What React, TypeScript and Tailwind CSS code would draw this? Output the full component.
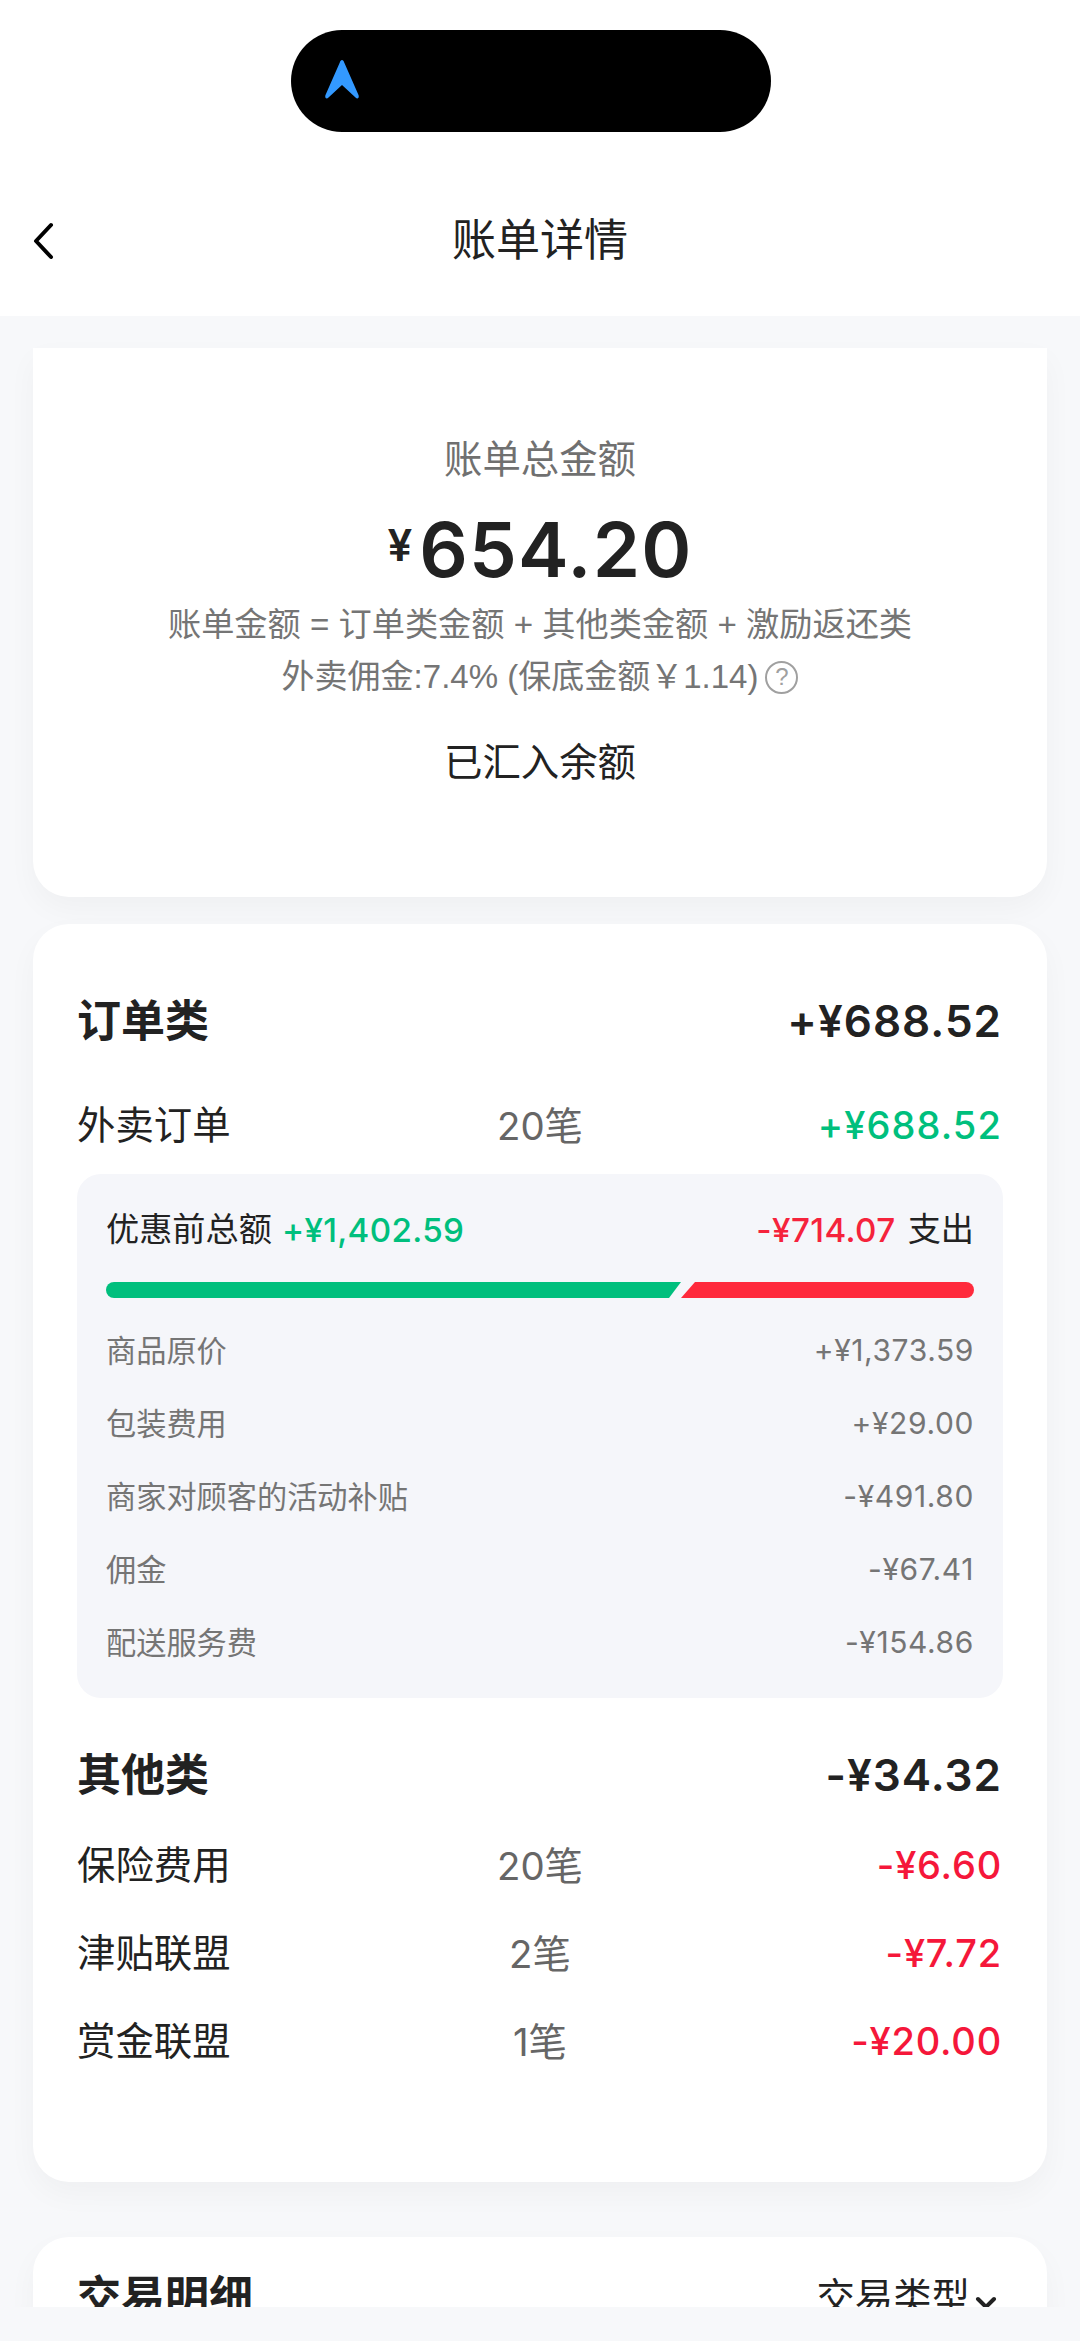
const breakdown: [string, string][] = [
  ["商品原价", "+¥1,373.59"],
  ["包装费用", "+¥29.00"],
  ["商家对顾客的活动补贴", "-¥491.80"],
  ["佣金", "-¥67.41"],
  ["配送服务费", "-¥154.86"],
];

const others: [string, string, string][] = [
  ["保险费用", "20笔", "-¥6.60"],
  ["津贴联盟", "2笔", "-¥7.72"],
  ["赏金联盟", "1笔", "-¥20.00"],
];

function LineRow({ name, count, amount, color }: { name: string; count: string; amount: string; color: string }) {
  return (
    <div className="grid grid-cols-3 items-center h-[88px]">
      <span className="text-[38.4px] leading-[56px] text-[#222]">{name}</span>
      <span className="text-[38.4px] leading-[56px] text-[#666] text-center font-['Inter','Noto_Sans_CJK_SC',sans-serif]">{count}</span>
      <span className={`text-[38px] leading-[56px] font-medium font-['Inter',sans-serif] tracking-[0.8px] text-right pr-[1px] mt-[-2px] ${color}`}>{amount}</span>
    </div>
  );
}

function SectionHead({ title, amount }: { title: string; amount: string }) {
  return (
    <div className="flex items-center justify-between h-[56px]">
      <span className="text-[44px] leading-[56px] font-bold text-[#222]">{title}</span>
      <span className="text-[44px] leading-[56px] font-semibold font-['Inter',sans-serif] tracking-[1px] pr-[1px] mt-[-2px] text-[#222]">{amount}</span>
    </div>
  );
}

export default function App() {
  return (
    <div className="w-[1080px] h-[2341px] flex flex-col overflow-hidden bg-[#f7f8fa] font-['Liberation_Sans','Noto_Sans_CJK_SC',sans-serif]">
      <header className="bg-white shrink-0 pt-[30px] pb-[46px]">
        <div className="ml-[291px] w-[480px] h-[102px] rounded-full bg-black flex items-center pl-[33px]">
          <svg className="mt-[-4px]" width="36" height="39" viewBox="0 0 36 39" fill="#3399ff">
            <path d="M18 0 C19 0 19.8 1 20.2 2.5 L34.5 35 C35.5 38 33.5 39.5 31.5 37.5 L18 25 L4.5 37.5 C2.5 39.5 .5 38 1.5 35 L15.8 2.5 C16.2 1 17 0 18 0Z" />
          </svg>
        </div>
        <div className="mt-[78px] h-[60px] grid grid-cols-[1fr_auto_1fr] items-center">
          <svg className="ml-[31px]" width="24" height="38" viewBox="0 0 24 38" fill="none" stroke="#000" strokeWidth="4" strokeLinecap="round" strokeLinejoin="round">
            <path d="M20 3 L5 19 L20 35" />
          </svg>
          <h1 className="text-[44px] leading-[60px] font-normal text-[#222] mt-[1px]">账单详情</h1>
          <div />
        </div>
      </header>

      <main className="flex-1 min-h-0 overflow-hidden px-[33px] pt-[32px]">
        <section className="bg-white rounded-b-[36px] shadow-[0_12px_30px_rgba(0,0,0,0.035)] pt-[90px] pb-[112px] text-center">
          <div className="text-[38.4px] leading-[44px] text-[#707070]">账单总金额</div>
          <div className="mt-[22px] h-[90px] flex items-center justify-center text-[#222]">
            <span className="text-[44px] leading-[44px] font-semibold font-['Inter',sans-serif] mt-[-8px] mr-[7px]">¥</span>
            <span className="text-[76px] leading-[90px] font-semibold font-['Inter',sans-serif] tracking-[1.2px]">654.20</span>
          </div>
          <div className="mt-[5px] text-[33.2px] leading-[52px] text-[#757575]">账单金额 = 订单类金额 + 其他类金额 + 激励返还类</div>
          <div className="flex items-center justify-center text-[33px] leading-[52px] text-[#757575]">
            <span>外卖佣金:7.4% (保底金额￥1.14)</span>
            <span className="ml-[7px] w-[33px] h-[33px] rounded-full border-[2.5px] border-[#a0a0a0] flex items-center justify-center text-[24px] leading-none text-[#a0a0a0]">?</span>
          </div>
          <div className="mt-[38px] text-[38.4px] leading-[44px] text-[#222]">已汇入余额</div>
        </section>

        <section className="mt-[27px] bg-white rounded-[36px] shadow-[0_12px_30px_rgba(0,0,0,0.035)] px-[44px] pt-[70px] pb-[96px]">
          <SectionHead title="订单类" amount="+¥688.52" />
          <div className="mt-[48px] grid grid-cols-3 items-center h-[56px]">
            <span className="text-[38.4px] leading-[56px] text-[#222]">外卖订单</span>
            <span className="text-[38.4px] leading-[56px] text-[#666] text-center font-['Inter','Noto_Sans_CJK_SC',sans-serif]">20笔</span>
            <span className="text-[38px] leading-[56px] font-medium font-['Inter',sans-serif] tracking-[1.1px] text-right pr-[1px] mt-[-2px] text-[#00bf7d]">+¥688.52</span>
          </div>

          <div className="mt-[20px] bg-[#f5f6fa] rounded-[24px] px-[29px] pt-[36px] pb-[18px]">
            <div className="flex items-center justify-between h-[40px] text-[33.2px] leading-[40px] text-[#222]">
              <div className="flex items-center gap-[10px]">
                <span>优惠前总额</span>
                <span className="font-medium font-['Inter',sans-serif] tracking-[0.3px] text-[#00bf7d]">+¥1,402.59</span>
              </div>
              <div className="flex items-center gap-[12px]">
                <span className="font-medium font-['Inter',sans-serif] tracking-[0.4px] text-[#f5233c]">-¥714.07</span>
                <span>支出</span>
              </div>
            </div>
            <div className="mt-[32px] flex h-[16px]">
              <div className="w-[575px] rounded-l-full bg-[#00bf7d] [clip-path:polygon(0_0,100%_0,calc(100%-12px)_100%,0_100%)]" />
              <div className="flex-1 rounded-r-full bg-[#ff2a3c] [clip-path:polygon(14px_0,100%_0,100%_100%,0_100%)]" />
            </div>
            <div className="mt-[18px]">
              {breakdown.map(([label, value]) => (
                <div key={label} className="flex items-center justify-between h-[72.8px] text-[#757575]">
                  <span className="text-[30.2px] leading-[40px]">{label}</span>
                  <span className="text-[30px] leading-[40px] font-['Inter',sans-serif] tracking-[0.6px] mt-[-4px]">{value}</span>
                </div>
              ))}
            </div>
          </div>

          <div className="mt-[50px]">
            <SectionHead title="其他类" amount="-¥34.32" />
          </div>
          <div className="mt-[18px]">
            {others.map(([n, c, a]) => (
              <LineRow key={n} name={n} count={c} amount={a} color="text-[#f5173a]" />
            ))}
          </div>
        </section>

        <section className="mt-[55px] bg-white rounded-t-[36px] shadow-[0_12px_30px_rgba(0,0,0,0.035)] px-[44px] pt-[33px] h-[200px]">
          <div className="flex items-center justify-between h-[56px]">
            <span className="text-[44px] leading-[56px] font-bold text-[#222]">交易明细</span>
            <div className="flex items-center gap-[5px] pr-[6px]">
              <span className="text-[38.4px] leading-[56px] text-[#222]">交易类型</span>
              <svg className="mt-[10px]" width="22" height="14" viewBox="0 0 22 14" fill="none" stroke="#222" strokeWidth="4" strokeLinecap="round" strokeLinejoin="round">
                <path d="M3 3 L11 11 L19 3" />
              </svg>
            </div>
          </div>
        </section>
      </main>

      <footer className="h-[34px] shrink-0 bg-[#f7f8fa]" />
    </div>
  );
}
